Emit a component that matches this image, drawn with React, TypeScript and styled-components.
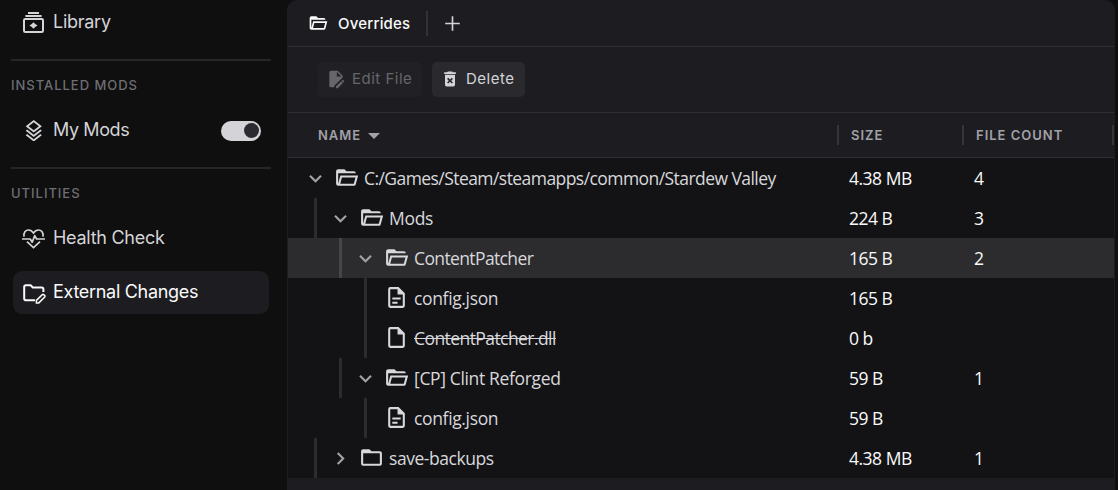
import React from "react";
import styled, { createGlobalStyle, css } from "styled-components";

const GlobalStyle = createGlobalStyle`
  * { box-sizing: border-box; }
  html, body { margin: 0; padding: 0; background: #0f0f0f; }
  body { overflow: hidden; font-family: Inter, "Liberation Sans", sans-serif; }
  svg { display: block; flex: none; }
`;

const Shell = styled.div`
  display: flex;
  width: 1118px;
  height: 490px;
  overflow: hidden;
  background: #0f0f0f;
`;

/* ---------- Sidebar ---------- */

const Sidebar = styled.nav`
  width: 287px;
  padding: 1px 16px 0 11px;
  display: flex;
  flex-direction: column;
`;

const NavItem = styled.div<{ $active?: boolean }>`
  display: flex;
  align-items: center;
  height: 43px;
  flex: none;
  margin: 0 2px;
  padding: 0 8px;
  border-radius: 9px;
  font-size: 18px;
  color: #d4d4d8;
  ${(p) =>
    p.$active &&
    css`
      margin-top: 11px;
      background: #1d1d21;
      color: #fafafa;
    `}
`;

const NavIcon = styled.span`
  display: flex;
  justify-content: center;
  width: 25px;
  margin-right: 7px;
`;

const NavLabel = styled.span<{ $tracking?: number }>`
  flex: 1;
  line-height: 41px;
  white-space: nowrap;
  padding-bottom: 2px;
  letter-spacing: ${(p) => p.$tracking ?? -0.27}px;
`;

const Divider = styled.hr`
  width: 100%;
  height: 2px;
  flex: none;
  margin: 15px 0 0;
  border: 0;
  background: #262628;
`;

const SectionLabel = styled.h2`
  display: flex;
  align-items: center;
  height: 48px;
  flex: none;
  margin: 0;
  font-size: 13px;
  font-weight: 500;
  letter-spacing: 0.97px;
  color: #6e6e74;
`;

const Toggle = styled.span`
  display: flex;
  align-items: center;
  justify-content: flex-end;
  width: 40px;
  height: 20px;
  padding-right: 2px;
  border-radius: 10px;
  background: #d4d4d8;
  &::after {
    content: "";
    width: 15px;
    height: 15px;
    border-radius: 50%;
    background: #2b2b31;
  }
`;

/* ---------- Main panel ---------- */

const Panel = styled.main`
  width: 828px;
  height: 490px;
  padding: 0 1px;
  border-radius: 10px 10px 0 0;
  background: #1d1d21;
  overflow: hidden;
`;

const TabBar = styled.div`
  display: flex;
  align-items: center;
  height: 47px;
  padding-left: 20px;
  border-bottom: 1px solid #303034;
  color: #fafafa;
`;

const TabTitle = styled.span`
  margin-left: 10px;
  width: 88px;
  padding-top: 1px;
  font-size: 15px;
  font-weight: 500;
  letter-spacing: 0.2px;
`;

const TabSeparator = styled.span`
  width: 2px;
  height: 25px;
  background: #323236;
  margin-right: 12px;
`;

const AddTab = styled.span`
  color: #d4d4d8;
`;

const Toolbar = styled.div`
  display: flex;
  align-items: center;
  gap: 10px;
  height: 66px;
  padding-left: 30px;
  border-bottom: 1px solid #303034;
`;

const ToolButton = styled.button<{ $width: number }>`
  display: flex;
  align-items: center;
  width: ${(p) => p.$width}px;
  height: 35px;
  padding: 0 0 2px 8px;
  gap: 6px;
  border: 0;
  border-radius: 5px;
  background: #2a2a2e;
  color: #d4d4d8;
  font: 400 15px Inter, sans-serif;
  letter-spacing: 0.5px;
  white-space: nowrap;
  svg {
    margin-top: 1px;
  }
  &:disabled {
    background: #212125;
    color: #66666b;
  }
`;

const TableHead = styled.div`
  display: grid;
  grid-template-columns: 551px 125px 1fr;
  align-items: center;
  height: 45px;
  border-bottom: 1px solid #303034;
`;

const HeadCell = styled.div<{ $pad?: number }>`
  display: flex;
  align-items: center;
  height: 20px;
  gap: 9px;
  padding-left: ${(p) => p.$pad ?? 12}px;
  border-right: 2px solid #35353a;
  font-size: 13px;
  font-weight: 600;
  letter-spacing: 1px;
  color: #a1a1a8;
`;

const SortArrow = styled.span`
  border: 6px solid transparent;
  border-top-color: #a1a1a8;
  border-bottom: 0;
  margin: 2px 0 0 -2px;
`;

const TableRow = styled.div<{ $selected?: boolean }>`
  display: grid;
  grid-template-columns: 549px 125px 1fr;
  height: 40px;
  background: ${(p) => (p.$selected ? "#2c2c2e" : "#131315")};
  --guide: ${(p) => (p.$selected ? "#464649" : "#2c2c2e")};
  font-family: "Open Sans", "Noto Sans", sans-serif;
  font-size: 17.5px;
  line-height: 40px;
  white-space: nowrap;
`;

const NameCell = styled.div<{ $depth: number }>`
  display: flex;
  align-items: center;
  height: 40px;
  padding-left: ${(p) => (p.$depth ? 1 + p.$depth * 25 : 15)}px;
  color: #d8d8dc;
`;

const Guide = styled.span`
  width: 3px;
  height: 40px;
  margin-right: -14px;
  background: var(--guide);
`;

const ArrowSlot = styled.span<{ $root: boolean }>`
  display: flex;
  width: 25px;
  margin-left: ${(p) => (p.$root ? 0 : 25)}px;
  margin-right: 5.5px;
  padding-top: 1px;
  color: #a1a1a8;
`;

const FileIconSlot = styled.span<{ $leaf: boolean }>`
  display: flex;
  padding-bottom: 1px;
  margin-left: ${(p) => (p.$leaf ? 30.5 : 0)}px;
`;

const FileName = styled.span<{ $removed?: boolean; $tracking: number }>`
  margin-left: 5.5px;
  letter-spacing: ${(p) => p.$tracking}px;
  text-decoration: ${(p) => (p.$removed ? "line-through" : "none")};
`;

const ValueCell = styled.div`
  padding-left: 12px;
  color: #fafafa;
  letter-spacing: -0.5px;
`;

/* ---------- Icons ---------- */

const glyphs = {
  folderOpen:
    "M6.1,10L4,18V8H21A2,2 0 0,0 19,6H12L10,4H4A2,2 0 0,0 2,6V18A2,2 0 0,0 4,20H19C19.9,20 20.7,19.4 20.9,18.5L23.2,10H6.1M19,18H6L7.6,12H20.6L19,18Z",
  folder:
    "M20,18H4V8H20M20,6H12L10,4H4C2.89,4 2,4.89 2,6V18A2,2 0 0,0 4,20H20A2,2 0 0,0 22,18V8C22,6.89 21.1,6 20,6Z",
  file: "M14,2H6A2,2 0 0,0 4,4V20A2,2 0 0,0 6,22H18A2,2 0 0,0 20,20V8L14,2M18,20H6V4H13V9H18V20Z",
  document:
    "M6,2A2,2 0 0,0 4,4V20A2,2 0 0,0 6,22H18A2,2 0 0,0 20,20V8L14,2H6M6,4H13V9H18V20H6V4M8,12V14H16V12H8M8,16V18H13V16H8Z",
  chevronDown: "M7.41,8.58L12,13.17L16.59,8.58L18,10L12,16L6,10L7.41,8.58Z",
  chevronRight: "M8.59,16.58L13.17,12L8.59,7.41L10,6L16,12L10,18L8.59,16.58Z",
  plus: "M19,12.8H12.8V19H11.2V12.8H5V11.2H11.2V5H12.8V11.2H19V12.8Z",
  trash:
    "M6,19A2,2 0 0,0 8,21H16A2,2 0 0,0 18,19V7H6V19M8.46,11.88L9.87,10.47L12,12.59L14.12,10.47L15.53,11.88L13.41,14L15.53,16.12L14.12,17.53L12,15.41L9.88,17.53L8.47,16.12L10.59,14L8.46,11.88M15.5,4L14.5,3H9.5L8.5,4H5V6H19V4H15.5Z",
  fileEdit:
    "M6 2C4.89 2 4 2.9 4 4V20C4 21.11 4.89 22 6 22H10V20.09L20 10.09V8L14 2H6M13 3.5L18.5 9H13V3.5M20.15 13C20 13 19.86 13.05 19.75 13.16L18.73 14.18L20.82 16.26L21.84 15.25C22.05 15.03 22.05 14.67 21.84 14.46L20.54 13.16C20.43 13.05 20.29 13 20.15 13M18.14 14.77L12 20.92V23H14.08L20.23 16.85L18.14 14.77Z",
  layers:
    "M12 0L3 7L4.63 8.27L12 14L19.36 8.27L21 7L12 0M19.37 10.73L12 16.47L4.62 10.74L3 12L12 19L21 12L19.37 10.73M19.37 15.73L12 21.47L4.62 15.74L3 17L12 24L21 17L19.37 15.73M12 2.53L17.74 7L12 11.47L6.26 7L12 2.53Z",
};

const Glyph = ({ name, size = 25 }: { name: keyof typeof glyphs; size?: number }) => (
  <svg width={size} height={size} viewBox="0 0 24 24" fill="currentColor">
    <path d={glyphs[name]} />
  </svg>
);

const LibraryIcon = () => (
  <svg width="21" height="21" viewBox="0 0 21 21" fill="currentColor">
    <rect x="5" y="0" width="11" height="2" />
    <rect x="2.4" y="3" width="16.2" height="2" />
    <rect x="1" y="7" width="19" height="13" rx="1.2" fill="none" stroke="currentColor" strokeWidth="2" />
    <path d="M10.5 10.2L12.2 11.9L14.6 13.5L12.2 15.1L10.5 16.8L8.8 15.1L6.4 13.5L8.8 11.9Z" />
  </svg>
);

const HealthIcon = () => (
  <svg width="23" height="20" viewBox="0 0 23 20" fill="none" stroke="currentColor" strokeWidth="1.7">
    <path d="M2 7.6C1.4 3.6 3.6 1 6.6 1C8.9 1 10.4 2.4 11.5 4C12.6 2.4 14.1 1 16.4 1C19.4 1 21.6 3.6 21 7.6" />
    <path d="M0 10H8.2L10.2 13.2L12.7 6.6L14.6 10H23" strokeLinejoin="round" />
    <path d="M5 12.6L11.5 18.6L18 12.6" />
  </svg>
);

const FolderEditIcon = () => (
  <svg width="24" height="22" viewBox="-1 -2 24 22" fill="none" stroke="currentColor">
    <path d="M12 16.2H3Q1.2 16.2 1.2 14.4V3Q1.2 1.2 3 1.2H7.6L9.8 3.4H18.6Q20.4 3.4 20.4 5.2V8" strokeWidth="2" />
    <path d="M13.4 18.9V16.4L19.3 10.6Q20 10 20.7 10.6L21.7 11.6Q22.3 12.3 21.7 13L15.8 18.9Z" strokeWidth="1.5" />
  </svg>
);

/* ---------- Data ---------- */

type Entry = {
  name: string;
  depth: number;
  icon: "folderOpen" | "folder" | "file" | "document";
  size: string;
  count?: number;
  tracking: number;
  selected?: boolean;
  removed?: boolean;
};

const entries: Entry[] = [
  { name: "C:/Games/Steam/steamapps/common/Stardew Valley", depth: 0, icon: "folderOpen", size: "4.38 MB", count: 4, tracking: -0.56 },
  { name: "Mods", depth: 1, icon: "folderOpen", size: "224 B", count: 3, tracking: -0.3 },
  { name: "ContentPatcher", depth: 2, icon: "folderOpen", size: "165 B", count: 2, tracking: -0.62, selected: true },
  { name: "config.json", depth: 3, icon: "document", size: "165 B", tracking: -0.35 },
  { name: "ContentPatcher.dll", depth: 3, icon: "file", size: "0 b", tracking: -0.57, removed: true },
  { name: "[CP] Clint Reforged", depth: 2, icon: "folderOpen", size: "59 B", count: 1, tracking: -0.35 },
  { name: "config.json", depth: 3, icon: "document", size: "59 B", tracking: -0.35 },
  { name: "save-backups", depth: 1, icon: "folder", size: "4.38 MB", count: 1, tracking: -0.46 },
];

const isFolder = (e: Entry) => e.icon === "folder" || e.icon === "folderOpen";

const FileRow = ({ entry }: { entry: Entry }) => (
  <TableRow $selected={entry.selected}>
    <NameCell $depth={entry.depth}>
      {entry.depth > 0 && <Guide />}
      {isFolder(entry) && (
        <ArrowSlot $root={entry.depth === 0}>
          <Glyph name={entry.icon === "folder" ? "chevronRight" : "chevronDown"} />
        </ArrowSlot>
      )}
      <FileIconSlot $leaf={!isFolder(entry)}>
        <Glyph name={entry.icon} />
      </FileIconSlot>
      <FileName $removed={entry.removed} $tracking={entry.tracking}>
        {entry.name}
      </FileName>
    </NameCell>
    <ValueCell>{entry.size}</ValueCell>
    <ValueCell>{entry.count}</ValueCell>
  </TableRow>
);

export default function App() {
  return (
    <>
      <GlobalStyle />
      <Shell>
        <Sidebar>
          <NavItem>
            <NavIcon><LibraryIcon /></NavIcon>
            <NavLabel>Library</NavLabel>
          </NavItem>
          <Divider />
          <SectionLabel>INSTALLED MODS</SectionLabel>
          <NavItem>
            <NavIcon><Glyph name="layers" size={21.5} /></NavIcon>
            <NavLabel $tracking={-0.4}>My Mods</NavLabel>
            <Toggle />
          </NavItem>
          <Divider />
          <SectionLabel>UTILITIES</SectionLabel>
          <NavItem>
            <NavIcon><HealthIcon /></NavIcon>
            <NavLabel>Health Check</NavLabel>
          </NavItem>
          <NavItem $active>
            <NavIcon><FolderEditIcon /></NavIcon>
            <NavLabel $tracking={-0.3}>External Changes</NavLabel>
          </NavItem>
        </Sidebar>
        <Panel>
          <TabBar>
            <Glyph name="folderOpen" size={20} />
            <TabTitle>Overrides</TabTitle>
            <TabSeparator />
            <AddTab><Glyph name="plus" /></AddTab>
          </TabBar>
          <Toolbar>
            <ToolButton $width={104} disabled>
              <Glyph name="fileEdit" size={20} />
              Edit File
            </ToolButton>
            <ToolButton $width={93}>
              <Glyph name="trash" size={20} />
              Delete
            </ToolButton>
          </Toolbar>
          <TableHead>
            <HeadCell $pad={30}>NAME <SortArrow /></HeadCell>
            <HeadCell>SIZE</HeadCell>
            <HeadCell>FILE COUNT</HeadCell>
          </TableHead>
          {entries.map((entry, i) => (
            <FileRow key={i} entry={entry} />
          ))}
        </Panel>
      </Shell>
    </>
  );
}
